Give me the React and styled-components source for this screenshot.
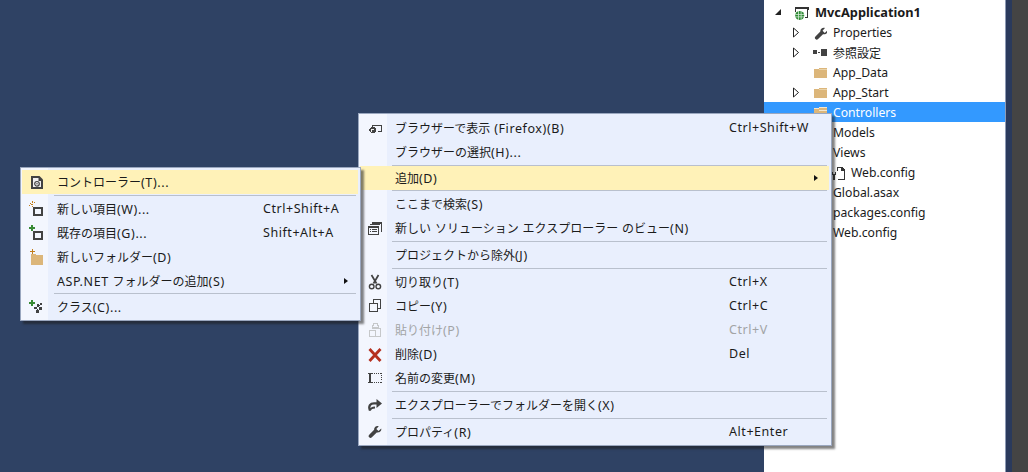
import React from "react";
import styled, { createGlobalStyle } from "styled-components";

const Global = createGlobalStyle`
  html, body { margin: 0; padding: 0; background: #2f4264; }
  body { font-family: "Noto Sans CJK JP", "Noto Sans", sans-serif; }
`;

const Page = styled.div`
  position: relative;
  display: flex;
  width: 1028px;
  height: 472px;
  overflow: hidden;
`;
const Editor = styled.div`
  flex: 0 0 764px;
  background: #2f4264;
`;
const Panel = styled.div`
  flex: 0 0 241px;
  padding-top: 2px;
  background: #fff;
  box-sizing: border-box;
`;
const Gutter = styled.div`
  flex: 0 0 7px;
  border-left: 1px solid #8d9ab4;
  box-sizing: border-box;
  background: #2a3a5c;
`;
const Chrome = styled.div`
  flex: 1;
  background: #444444;
`;
const TreeRow = styled.div`
  display: flex;
  align-items: center;
  height: 20px;
  padding-left: ${(p) => 6 + p.$level * 18}px;
  background: ${(p) => (p.$selected ? "#3399ff" : "transparent")};
  color: ${(p) => (p.$selected ? "#fff" : "#1a1a1a")};
  font-size: 12px;
  font-weight: ${(p) => (p.$bold ? 700 : 400)};
  white-space: nowrap;
`;
const Expander = styled.span`
  display: flex;
  flex: 0 0 16px;
  justify-content: center;
  align-items: center;
`;
const TreeIcon = styled.span`
  display: flex;
  flex: 0 0 29px;
  padding-left: 7px;
  box-sizing: border-box;
  align-items: center;
`;
const Menu = styled.div`
  position: absolute;
  left: ${(p) => p.$x}px;
  top: ${(p) => p.$y}px;
  width: ${(p) => p.$w}px;
  box-sizing: border-box;
  padding: 2px 2px 1px 1px;
  border: 1px solid #9aa7bf;
  background: linear-gradient(to right, #f3f6fe ${(p) => p.$gutter}px, #e9effd ${(p) => p.$gutter}px);
  box-shadow: 3px 3px 2px rgba(30, 30, 30, 0.55);
  z-index: ${(p) => p.$z};
`;
const Item = styled.div`
  position: relative;
  display: flex;
  align-items: center;
  height: 24px;
  font-size: 12px;
  line-height: 24px;
  white-space: nowrap;
  color: ${(p) => (p.$disabled ? "#a2a4a5" : "#1b1b1b")};
  background: ${(p) => (p.$active ? "#fff2b8" : "transparent")};
`;
const ItemIcon = styled.span`
  display: flex;
  flex: 0 0 16px;
  margin-left: ${(p) => p.$inset}px;
  margin-right: ${(p) => p.$gap}px;
  align-items: center;
  justify-content: center;
`;
const Label = styled.span`
  flex: 0 0 ${(p) => p.$w}px;
`;
const Latin = styled.span`
  font-family: "Noto Sans", sans-serif;
  font-size: ${(p) => (p.$tree ? (p.$bold ? "12.8px" : "12.2px") : "12.5px")};
  letter-spacing: ${(p) => (p.$tree ? 0 : 0.6)}px;
`;
const Shortcut = styled.span`
  font-family: "Noto Sans", sans-serif;
  font-size: 12.5px;
  letter-spacing: 0.55px;
`;
const Arrow = styled.span`
  position: absolute;
  right: ${(p) => p.$r}px;
  top: 9px;
  width: 0;
  height: 0;
  border-left: 4px solid #111;
  border-top: 3.5px solid transparent;
  border-bottom: 3.5px solid transparent;
`;
const Sep = styled.div`
  height: ${(p) => p.$h}px;
  padding-top: ${(p) => p.$top}px;
  margin-left: ${(p) => p.$left}px;
  margin-right: 2px;
  box-sizing: border-box;
  &::after {
    content: "";
    display: block;
    height: 1px;
    background: #b9c0cd;
  }
`;

const Mixed = ({ text, tree, bold }) =>
  text.split(/([\x00-\x7f]+)/).filter(Boolean).map((part, i) =>
    /^[\x00-\x7f]+$/.test(part) ? (
      <Latin key={i} $tree={tree} $bold={bold}>{part}</Latin>
    ) : (
      <span key={i}>{part}</span>
    )
  );

const D = "#424242";
const Svg = ({ children }) => (
  <svg width={16} height={16} viewBox="0 0 16 16" fill="none" shapeRendering="crispEdges">{children}</svg>
);
const Smooth = ({ children, box = "0 0 16 16" }) => (
  <svg width={16} height={16} viewBox={box} fill="none">{children}</svg>
);

const Folder = () => (
  <Svg><path d="M3 5h4l1-1h8v10H3z" fill="#dcb67a" /><path d="M8 5h8v1H8z" fill="#e9d3a9" /></Svg>
);
const FolderSel = () => (
  <Svg><path d="M3 5h4l1-1h8v10H3z" fill="#dcb67a" /><path d="M3 4h5v1H3zM8 3h8v1H8zM8 6h8v1H8z" fill="#f2e6d0" /></Svg>
);
const WrenchPath = () => (
  <path d="M15 4.200 12 7 9.500 4.500 12.200 1.500C9.500.7 6.800 2.500 7 5.500L1.500 11c-1 1-.9 2.200 0 3 .9.900 2 .8 3-.1L10 8.500c3 .7 5.700-1.500 5-4.300z" fill={D} />
);
const icons = {
  controller: (
    <Smooth><path d="M2 2h8.500L14 5.500V15H2z" fill={D} /><path d="M4 4h5.500v3H12v6H4z" fill="#f0eff1" /><circle cx="8" cy="9.800" r="2.300" stroke={D} strokeWidth="1.200" /><circle cx="8" cy="9.800" r=".7" fill={D} /></Smooth>
  ),
  newItem: (
    <Svg><path d="M4 6h10v9H4zM6 8v5h6V8z" fill={D} fillRule="evenodd" /><path d="M1 2h1v1H1zM3 0h1v2H3zM5 1h1v1H5zM2 3h2v1H2zM0 4h1v1H0zM3 5h1v1H3z" fill="#c27d1a" /></Svg>
  ),
  addItem: (
    <Svg><path d="M4 6h10v9H4zM6 8v5h6V8z" fill={D} fillRule="evenodd" /><path d="M2 0h2v2h2v2H4v2H2V4H0V2h2z" fill="#388a34" /></Svg>
  ),
  newFolder: (
    <Svg><path d="M2 5h4l1 1h7v10H2z" fill="#dcb67a" /><path d="M3 0h1v2h2v1H4v2H3V3H1V2h2z" fill="#c27d1a" /></Svg>
  ),
  cls: (
    <Svg><path d="M2 1h2v2h2v2H4v2H2V5H0V3h2z" fill="#388a34" /><path d="M8 5h2v3H8zM11 4h2v2h-2zM5 8h3v2H5zM10 8h3v3h-3zM7 11h3v3H7zM8 10h1v1H8zM10 6h1v1h-1z" fill={D} /></Svg>
  ),
  browser: (
    <Svg><path d="M5 5h10v7h-4v-1h3V6H6v1H5z" fill={D} /><path d="M4 7h3l2 2v2l-2 2H4l-2-2V9z" fill={D} /><path d="M4 9h3v1H5v2H4z" fill="#f1f1f1" /></Svg>
  ),
  view: (
    <Svg><path d="M5 2h10v10h-1V4H5z" fill={D} /><path d="M3 4h10v1H3z" fill={D} /><path d="M1 6h11v9H1zM2 8v6h9V8z" fill={D} fillRule="evenodd" /><path d="M3 9h1v1H3zM5 9h5v1H5zM3 11h1v1H3zM5 11h5v1H5z" fill={D} /></Svg>
  ),
  cut: (
    <Smooth><path d="M4.500 1 9.500 9.500M11.500 1 6.500 9.500" stroke={D} strokeWidth="1.700" /><circle cx="4.700" cy="12.500" r="2.300" stroke={D} strokeWidth="1.400" /><circle cx="11.300" cy="12.500" r="2.300" stroke={D} strokeWidth="1.400" /></Smooth>
  ),
  copy: (
    <Svg><path d="M6 1h8v10h-3v-1h2V2H7v3H6z" fill={D} /><path d="M2 5h9v9H2zM3 6v7h7V6z" fill={D} fillRule="evenodd" /></Svg>
  ),
  paste: (
    <Svg><path d="M5 6V3h1V1h5v2h1v3h2v9H9v-1h4V7H5zM6 5h5V4h-1V2H7v2H6z" fill="#c6c8ca" fillRule="evenodd" /><path d="M2 8h7v7H2zM3 9v5h5V9z" fill="#c6c8ca" fillRule="evenodd" /></Svg>
  ),
  del: (
    <Smooth><path d="M2.500 3 13.500 15M13.500 3 2.500 15" stroke="#b5301f" strokeWidth="2.800" /></Smooth>
  ),
  rename: (
    <Svg><path d="M1 3h5v1H4v8h2v1H1v-1h1V4H1zM3 4h1v8H3z" fill={D} /><path d="M7 3h1v1H7zM9 3h1v1H9zM11 3h1v1h-1zM13 3h2v1h-2zM14 5h1v1h-1zM14 7h1v1h-1zM14 9h1v1h-1zM7 12h1v1H7zM9 12h1v1H9zM11 12h1v1h-1zM13 12h2v1h-2z" fill={D} /></Svg>
  ),
  redo: (
    <Smooth><path d="M3 13.500C1 9 3.500 6.300 7 6.300h4" stroke={D} strokeWidth="2.300" /><path d="M9.500 2 15 6.500 9.500 11z" fill={D} /><path d="M3 13.500c.6-2 2.500-3 5-3" stroke={D} strokeWidth="1.800" /></Smooth>
  ),
  wrench: <Smooth box="-1 -1 18 18"><WrenchPath /></Smooth>,
};

const ExpandOpen = () => (
  <svg width="8" height="8" viewBox="0 0 8 8"><path d="M7 1v6H1z" fill="#222" /></svg>
);
const ExpandClosed = () => (
  <svg width="8" height="11" viewBox="0 0 8 11"><path d="M1.500 1 6.500 5.500 1.500 10z" fill="#fff" stroke="#222" /></svg>
);
const ProjectIcon = () => (
  <svg width={16} height={16} viewBox="0 0 16 16" fill="none">
    <path d="M2 3h14v3h-1v8h-3v-1h2V5H3v3H2z" fill="#333" />
    <circle cx="6.700" cy="11.500" r="4.500" fill="#2f8a35" />
    <path d="M2.500 10h8.500v.8H2.500zM2.500 12.500h8.500v.8H2.500zM5 7h.8v9H5zM7.700 7h.8v9h-.8z" fill="#d6ecd7" />
  </svg>
);
const RefIcon = () => (
  <Svg><path d="M2 6h4v4H2zM10 5h6v7h-6zM7 8h2v1H7z" fill={D} /></Svg>
);
const ConfigIcon = () => (
  <Svg><path d="M8 3h5l3 3v10H9v-1h6V7h-3V4H9v3H8z" fill="#333" /><path d="M3 8h1v2h2V8h1v3H6v5H4v-5H3z" fill="#333" /></Svg>
);
const TreeWrench = () => (
  <Smooth box="-3.500 -3 18 18"><WrenchPath /></Smooth>
);

const tree = [
  { level: 0, exp: "open", icon: <ProjectIcon />, label: "MvcApplication1", bold: true },
  { level: 1, exp: "closed", icon: <TreeWrench />, label: "Properties" },
  { level: 1, exp: "closed", icon: <RefIcon />, label: "参照設定" },
  { level: 1, icon: <Folder />, label: "App_Data" },
  { level: 1, exp: "closed", icon: <Folder />, label: "App_Start" },
  { level: 1, icon: <FolderSel />, label: "Controllers", selected: true },
  { level: 1, icon: <Folder />, label: "Models" },
  { level: 1, icon: <Folder />, label: "Views" },
  { level: 2, icon: <ConfigIcon />, label: "Web.config" },
  { level: 1, label: "Global.asax" },
  { level: 1, label: "packages.config" },
  { level: 1, label: "Web.config" },
];

const leftMenu = [
  { label: "コントローラー(T)...", icon: "controller", active: true },
  { sep: 3, top: 1 },
  { label: "新しい項目(W)...", icon: "newItem", key: "Ctrl+Shift+A" },
  { label: "既存の項目(G)...", icon: "addItem", key: "Shift+Alt+A" },
  { label: "新しいフォルダー(D)", icon: "newFolder" },
  { label: "ASP.NET フォルダーの追加(S)", sub: true },
  { sep: 2, top: 0 },
  { label: "クラス(C)...", icon: "cls" },
];
const rightMenu = [
  { label: "ブラウザーで表示 (Firefox)(B)", icon: "browser", key: "Ctrl+Shift+W" },
  { label: "ブラウザーの選択(H)..." },
  { sep: 2, top: 1 },
  { label: "追加(D)", active: true, sub: true },
  { sep: 2, top: 0 },
  { label: "ここまで検索(S)" },
  { label: "新しい ソリューション エクスプローラー のビュー(N)", icon: "view" },
  { sep: 3, top: 1 },
  { label: "プロジェクトから除外(J)" },
  { sep: 3, top: 1 },
  { label: "切り取り(T)", icon: "cut", key: "Ctrl+X" },
  { label: "コピー(Y)", icon: "copy", key: "Ctrl+C" },
  { label: "貼り付け(P)", icon: "paste", key: "Ctrl+V", disabled: true },
  { label: "削除(D)", icon: "del", key: "Del" },
  { label: "名前の変更(M)", icon: "rename" },
  { sep: 3, top: 1 },
  { label: "エクスプローラーでフォルダーを開く(X)", icon: "redo" },
  { sep: 3, top: 1 },
  { label: "プロパティ(R)", icon: "wrench", key: "Alt+Enter" },
];

const ContextMenu = ({ items, x, y, w, z, gutter, sepLeft, inset, gap, labelW, arrowR }) => (
  <Menu $x={x} $y={y} $w={w} $z={z} $gutter={gutter}>
    {items.map((it, i) =>
      it.sep ? (
        <Sep key={i} $h={it.sep} $top={it.top} $left={sepLeft} />
      ) : (
        <Item key={i} $active={it.active} $disabled={it.disabled}>
          <ItemIcon $inset={inset} $gap={gap}>{it.icon ? icons[it.icon] : null}</ItemIcon>
          <Label $w={labelW}><Mixed text={it.label} /></Label>
          {it.key && <Shortcut>{it.key}</Shortcut>}
          {it.sub && <Arrow $r={arrowR} />}
        </Item>
      )
    )}
  </Menu>
);

export default function App() {
  return (
    <Page>
      <Global />
      <Editor />
      <Panel>
        {tree.map((r) => (
          <TreeRow key={r.label + r.level} $level={r.level} $bold={r.bold} $selected={r.selected}>
            <Expander>
              {r.exp === "open" && <ExpandOpen />}
              {r.exp === "closed" && <ExpandClosed />}
            </Expander>
            <TreeIcon>{r.icon}</TreeIcon>
            <span><Mixed text={r.label} tree bold={r.bold} /></span>
          </TreeRow>
        ))}
      </Panel>
      <Gutter />
      <Chrome />
      <ContextMenu items={rightMenu} x={358} y={113} w={474} z={1} gutter={28} sepLeft={32} inset={7} gap={12} labelW={334} arrowR={11} />
      <ContextMenu items={leftMenu} x={20} y={167} w={341} z={2} gutter={27} sepLeft={32} inset={7} gap={12} labelW={206} arrowR={10} />
    </Page>
  );
}
